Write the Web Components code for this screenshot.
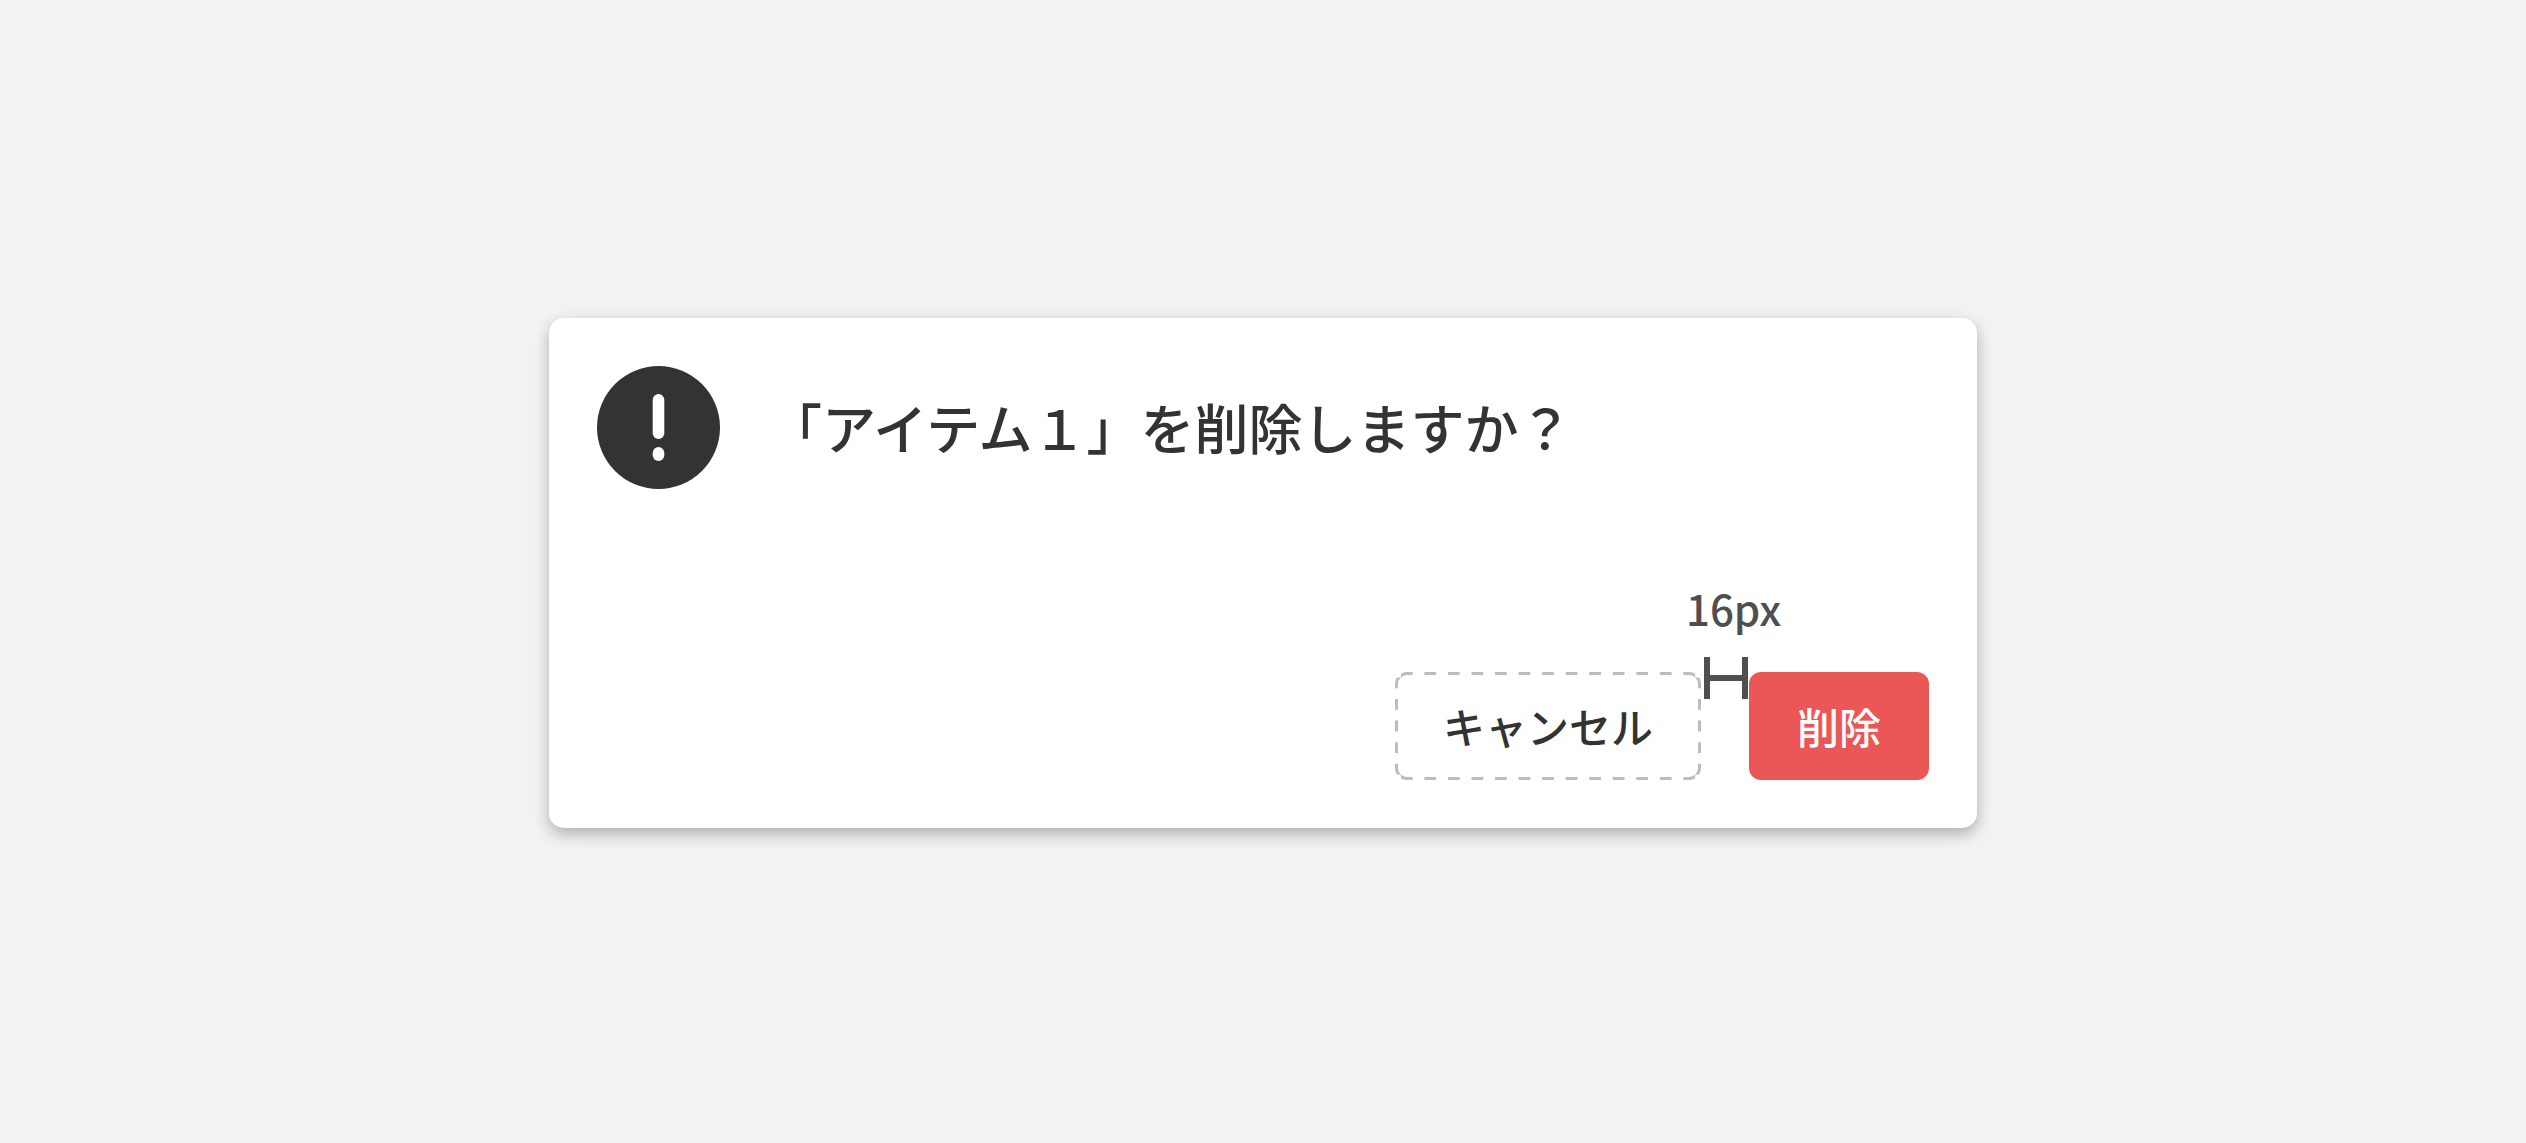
<!DOCTYPE html>
<html lang="ja">
<head>
<meta charset="utf-8">
<meta name="viewport" content="width=device-width, initial-scale=1">
<title>削除の確認</title>
<style>
  html, body { margin: 0; }
  body {
    min-height: 100vh;
    box-sizing: border-box;
    padding: 3px 24px 0;
    display: flex;
    align-items: center;
    justify-content: center;
    background: #f2f2f2;
    color: #333;
    font-family: "Noto Sans CJK JP", "Noto Sans", sans-serif;
    font-weight: 500;
  }
</style>
</head>
<body>
<confirm-dialog>
  <alert-icon slot="icon"></alert-icon>
  <span slot="title">「アイテム１」を削除しますか？</span>
  <dialog-button slot="actions" variant="outline">キャンセル</dialog-button>
  <gap-measure slot="actions">16px</gap-measure>
  <dialog-button slot="actions" variant="danger">削除</dialog-button>
</confirm-dialog>

<script>
class ConfirmDialog extends HTMLElement {
  constructor() {
    super();
    this.attachShadow({ mode: "open" }).innerHTML = `
      <style>
        :host { display: block; width: 100%; max-width: 1428px; }
        section {
          box-sizing: border-box;
          padding: 48px;
          display: flex;
          flex-direction: column;
          gap: 183px;
          background: #fff;
          border-radius: 15px;
          box-shadow: 0 6px 15px rgba(0, 0, 0, .28);
        }
        header { display: flex; align-items: center; gap: 48px; }
        h1 { margin: 0; padding-bottom: 2px; font-size: 54px; line-height: 81px; font-weight: 500; }
        footer { display: flex; justify-content: flex-end; }
      </style>
      <section role="alertdialog" aria-labelledby="title">
        <header><slot name="icon"></slot><h1 id="title"><slot name="title"></slot></h1></header>
        <footer><slot name="actions"></slot></footer>
      </section>`;
  }
}

class AlertIcon extends HTMLElement {
  constructor() {
    super();
    this.attachShadow({ mode: "open" }).innerHTML = `
      <style>
        :host { display: block; flex: none; width: 123px; }
        svg { display: block; width: 100%; }
      </style>
      <svg viewBox="0 0 123 123" aria-hidden="true">
        <circle cx="61.5" cy="61.5" r="61.5" fill="#333"/>
        <rect x="55.7" y="28" width="11.6" height="45" rx="5.8" fill="#fff"/>
        <rect x="55.7" y="81" width="11.6" height="14" rx="5.8" fill="#fff"/>
      </svg>`;
  }
}

class DialogButton extends HTMLElement {
  constructor() {
    super();
    this.attachShadow({ mode: "open" }).innerHTML = `
      <style>
        :host { display: block; }
        button {
          position: relative;
          display: block;
          box-sizing: border-box;
          height: 108px;
          padding: 0 48px 2px;
          border: 0;
          border-radius: 12px;
          background: #fff;
          color: #333;
          font: inherit;
          font-size: 42px;
          line-height: 63px;
          white-space: nowrap;
          cursor: pointer;
        }
        :host([variant="danger"]) button { background: #eb5757; color: #fff; }
        svg { display: none; position: absolute; inset: 0; width: 100%; height: 100%; }
        :host([variant="outline"]) svg { display: block; }
      </style>
      <button type="button"><svg aria-hidden="true">
        <clipPath id="dashes"></clipPath>
        <rect class="frame" x="1.5" y="1.5" rx="10.5" fill="none" stroke="#bdbdbd" stroke-width="3" clip-path="url(#dashes)"/>
      </svg><slot></slot></button>`;
  }
  connectedCallback() {
    if (this.getAttribute("variant") !== "outline") return;
    this.drawFrame();
    new ResizeObserver(() => this.drawFrame()).observe(this);
  }
  // Spreads whole dashes evenly along each side, with half a gap at the corners.
  drawFrame() {
    const { width, height } = this.getBoundingClientRect();
    if (!width || !height) return;
    const frame = this.shadowRoot.querySelector(".frame");
    frame.setAttribute("width", width - 3);
    frame.setAttribute("height", height - 3);
    const depth = 6;
    let rects = "";
    const nx = Math.round(width / 23.5), px = width / nx;
    for (let i = 0; i < nx; i++) {
      const x = (i + .25) * px;
      for (const y of [0, height - depth])
        rects += `<rect x="${x}" y="${y}" width="${px / 2}" height="${depth}"/>`;
    }
    const ny = Math.round(height / 21), py = height / ny;
    for (let i = 0; i < ny; i++) {
      const y = (i + .25) * py;
      for (const x of [0, width - depth])
        rects += `<rect x="${x}" y="${y}" width="${depth}" height="${py / 2}"/>`;
    }
    this.shadowRoot.querySelector("#dashes").innerHTML = rects;
  }
}

class GapMeasure extends HTMLElement {
  constructor() {
    super();
    this.attachShadow({ mode: "open" }).innerHTML = `
      <style>
        :host { display: block; position: relative; width: 48px; color: #4f4f4f; }
        div {
          position: absolute;
          left: -15px;
          bottom: 81px;
          display: flex;
          flex-direction: column;
          align-items: flex-start;
          gap: 18px;
          font-size: 42px;
          line-height: 63px;
          white-space: nowrap;
        }
        svg { display: block; width: 44px; height: 42px; margin-left: 18px; }
      </style>
      <div><span><slot></slot></span>
        <svg viewBox="0 0 44 42" aria-hidden="true"><path d="M3 0V42M41 0V42M3 21H41" fill="none" stroke="currentColor" stroke-width="6"/></svg>
      </div>`;
  }
}

customElements.define("confirm-dialog", ConfirmDialog);
customElements.define("alert-icon", AlertIcon);
customElements.define("dialog-button", DialogButton);
customElements.define("gap-measure", GapMeasure);
</script>
</body>
</html>
